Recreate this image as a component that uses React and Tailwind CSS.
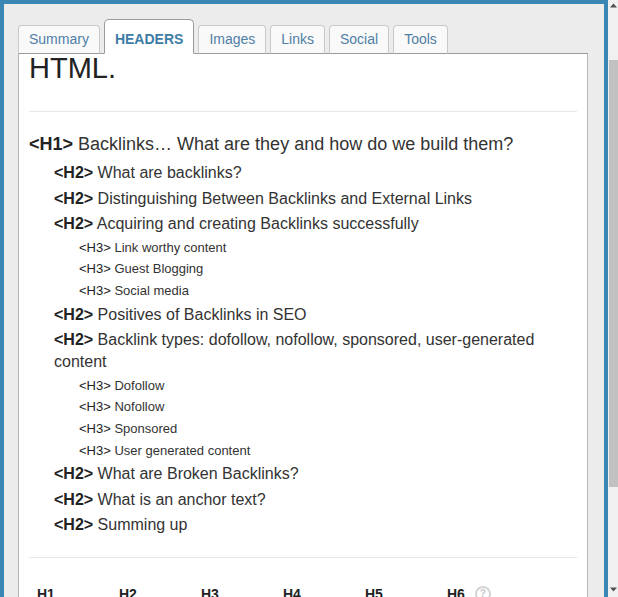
const tabs = ["Summary", "HEADERS", "Images", "Links", "Social", "Tools"];

const heads = [
  [2, "What are backlinks?"],
  [2, "Distinguishing Between Backlinks and External Links"],
  [2, "Acquiring and creating Backlinks successfully"],
  [3, "Link worthy content"],
  [3, "Guest Blogging"],
  [3, "Social media"],
  [2, "Positives of Backlinks in SEO"],
  [2, "Backlink types: dofollow, nofollow, sponsored, user-generated content"],
  [3, "Dofollow"],
  [3, "Nofollow"],
  [3, "Sponsored"],
  [3, "User generated content"],
  [2, "What are Broken Backlinks?"],
  [2, "What is an anchor text?"],
  [2, "Summing up"],
];

function Tab({ label }) {
  const active = label === "HEADERS";
  if (active) {
    return (
      <div className="relative z-10 -mb-px h-[35px] px-[10px] pt-[9px] rounded-t-[5px] border border-[#9a9a9a] border-b-white bg-white text-[14px] font-bold text-[#3d7ca5]">
        {label}
      </div>
    );
  }
  return (
    <div className="relative z-10 -mb-px h-[29px] px-[10px] pt-[3px] rounded-t-[4px] border border-[#c9c9c9] border-b-[#9a9a9a] bg-[#f9f9f9] text-[14px] text-[#4f7fa5]">
      {label}
    </div>
  );
}

function Row({ level, text }) {
  if (level === 2) {
    return (
      <div className="pl-[25px] text-[16px] leading-[22px] text-[#333]">
        <b className="text-[#222]">&lt;H2&gt;</b> {text}
      </div>
    );
  }
  return (
    <div className="pl-[50px] text-[13px] leading-[18px] text-[#333]">
      <span className="text-[#222]">&lt;H3&gt;</span> {text}
    </div>
  );
}

export default function App() {
  return (
    <div className="flex h-[597px] w-[618px] overflow-hidden font-['Liberation_Sans',Arial,sans-serif]">
      <div className="flex w-[608px] flex-col border-x-4 border-t-4 border-[#3b87b3] bg-[#ececec] pl-[14px] pr-[16px] pt-[15px]">
        <div className="flex items-end gap-[4px]">
          {tabs.map((t) => (
            <Tab key={t} label={t} />
          ))}
        </div>
        <div className="flex-1 overflow-hidden border-x border-t border-x-[#b4b4b4] border-t-[#9a9a9a] bg-white px-[10px]">
          <div className="text-[29px] leading-[29px] text-[#222]">HTML.</div>
          <div className="mt-[28px] h-px bg-[#e8e8e8]" />
          <div className="mt-[20px] mb-[6px] text-[18px] leading-[24px] text-[#333]">
            <b className="text-[#222]">&lt;H1&gt;</b> Backlinks… What are they and how do we build them?
          </div>
          <div className="flex flex-col gap-[3.6px]">
            {heads.map(([l, t], i) => (
              <Row key={i} level={l} text={t} />
            ))}
          </div>
          <div className="mt-[21px] h-px bg-[#e8e8e8]" />
          <div className="mt-[27px] grid grid-cols-[repeat(6,82px)] text-[14px] font-bold leading-[18px] text-[#222]">
            {["H1", "H2", "H3", "H4", "H5", "H6"].map((h) => (
              <div key={h} className="flex items-center gap-[10px] pl-[8px]">
                {h}
                {h === "H6" && (
                  <span className="flex h-[16px] w-[16px] items-center justify-center rounded-full border-2 border-[#d4d4d4] text-[10px] text-[#c8c8c8]">
                    ?
                  </span>
                )}
              </div>
            ))}
          </div>
        </div>
      </div>
      <div className="relative w-[10px] bg-[#f0f0f0]">
        <svg className="absolute left-[2px] top-[3px]" width="7" height="5" viewBox="0 0 7 5">
          <path d="M0 4.5 L3.5 0.5 L7 4.5 Z" fill="#505050" />
        </svg>
        <div className="absolute left-[1px] right-0 top-[60px] h-[427px] bg-[#c1c1c1]" />
        <svg className="absolute left-[2px] top-[587px]" width="7" height="5" viewBox="0 0 7 5">
          <path d="M0 0.5 L3.5 4.5 L7 0.5 Z" fill="#505050" />
        </svg>
      </div>
    </div>
  );
}
